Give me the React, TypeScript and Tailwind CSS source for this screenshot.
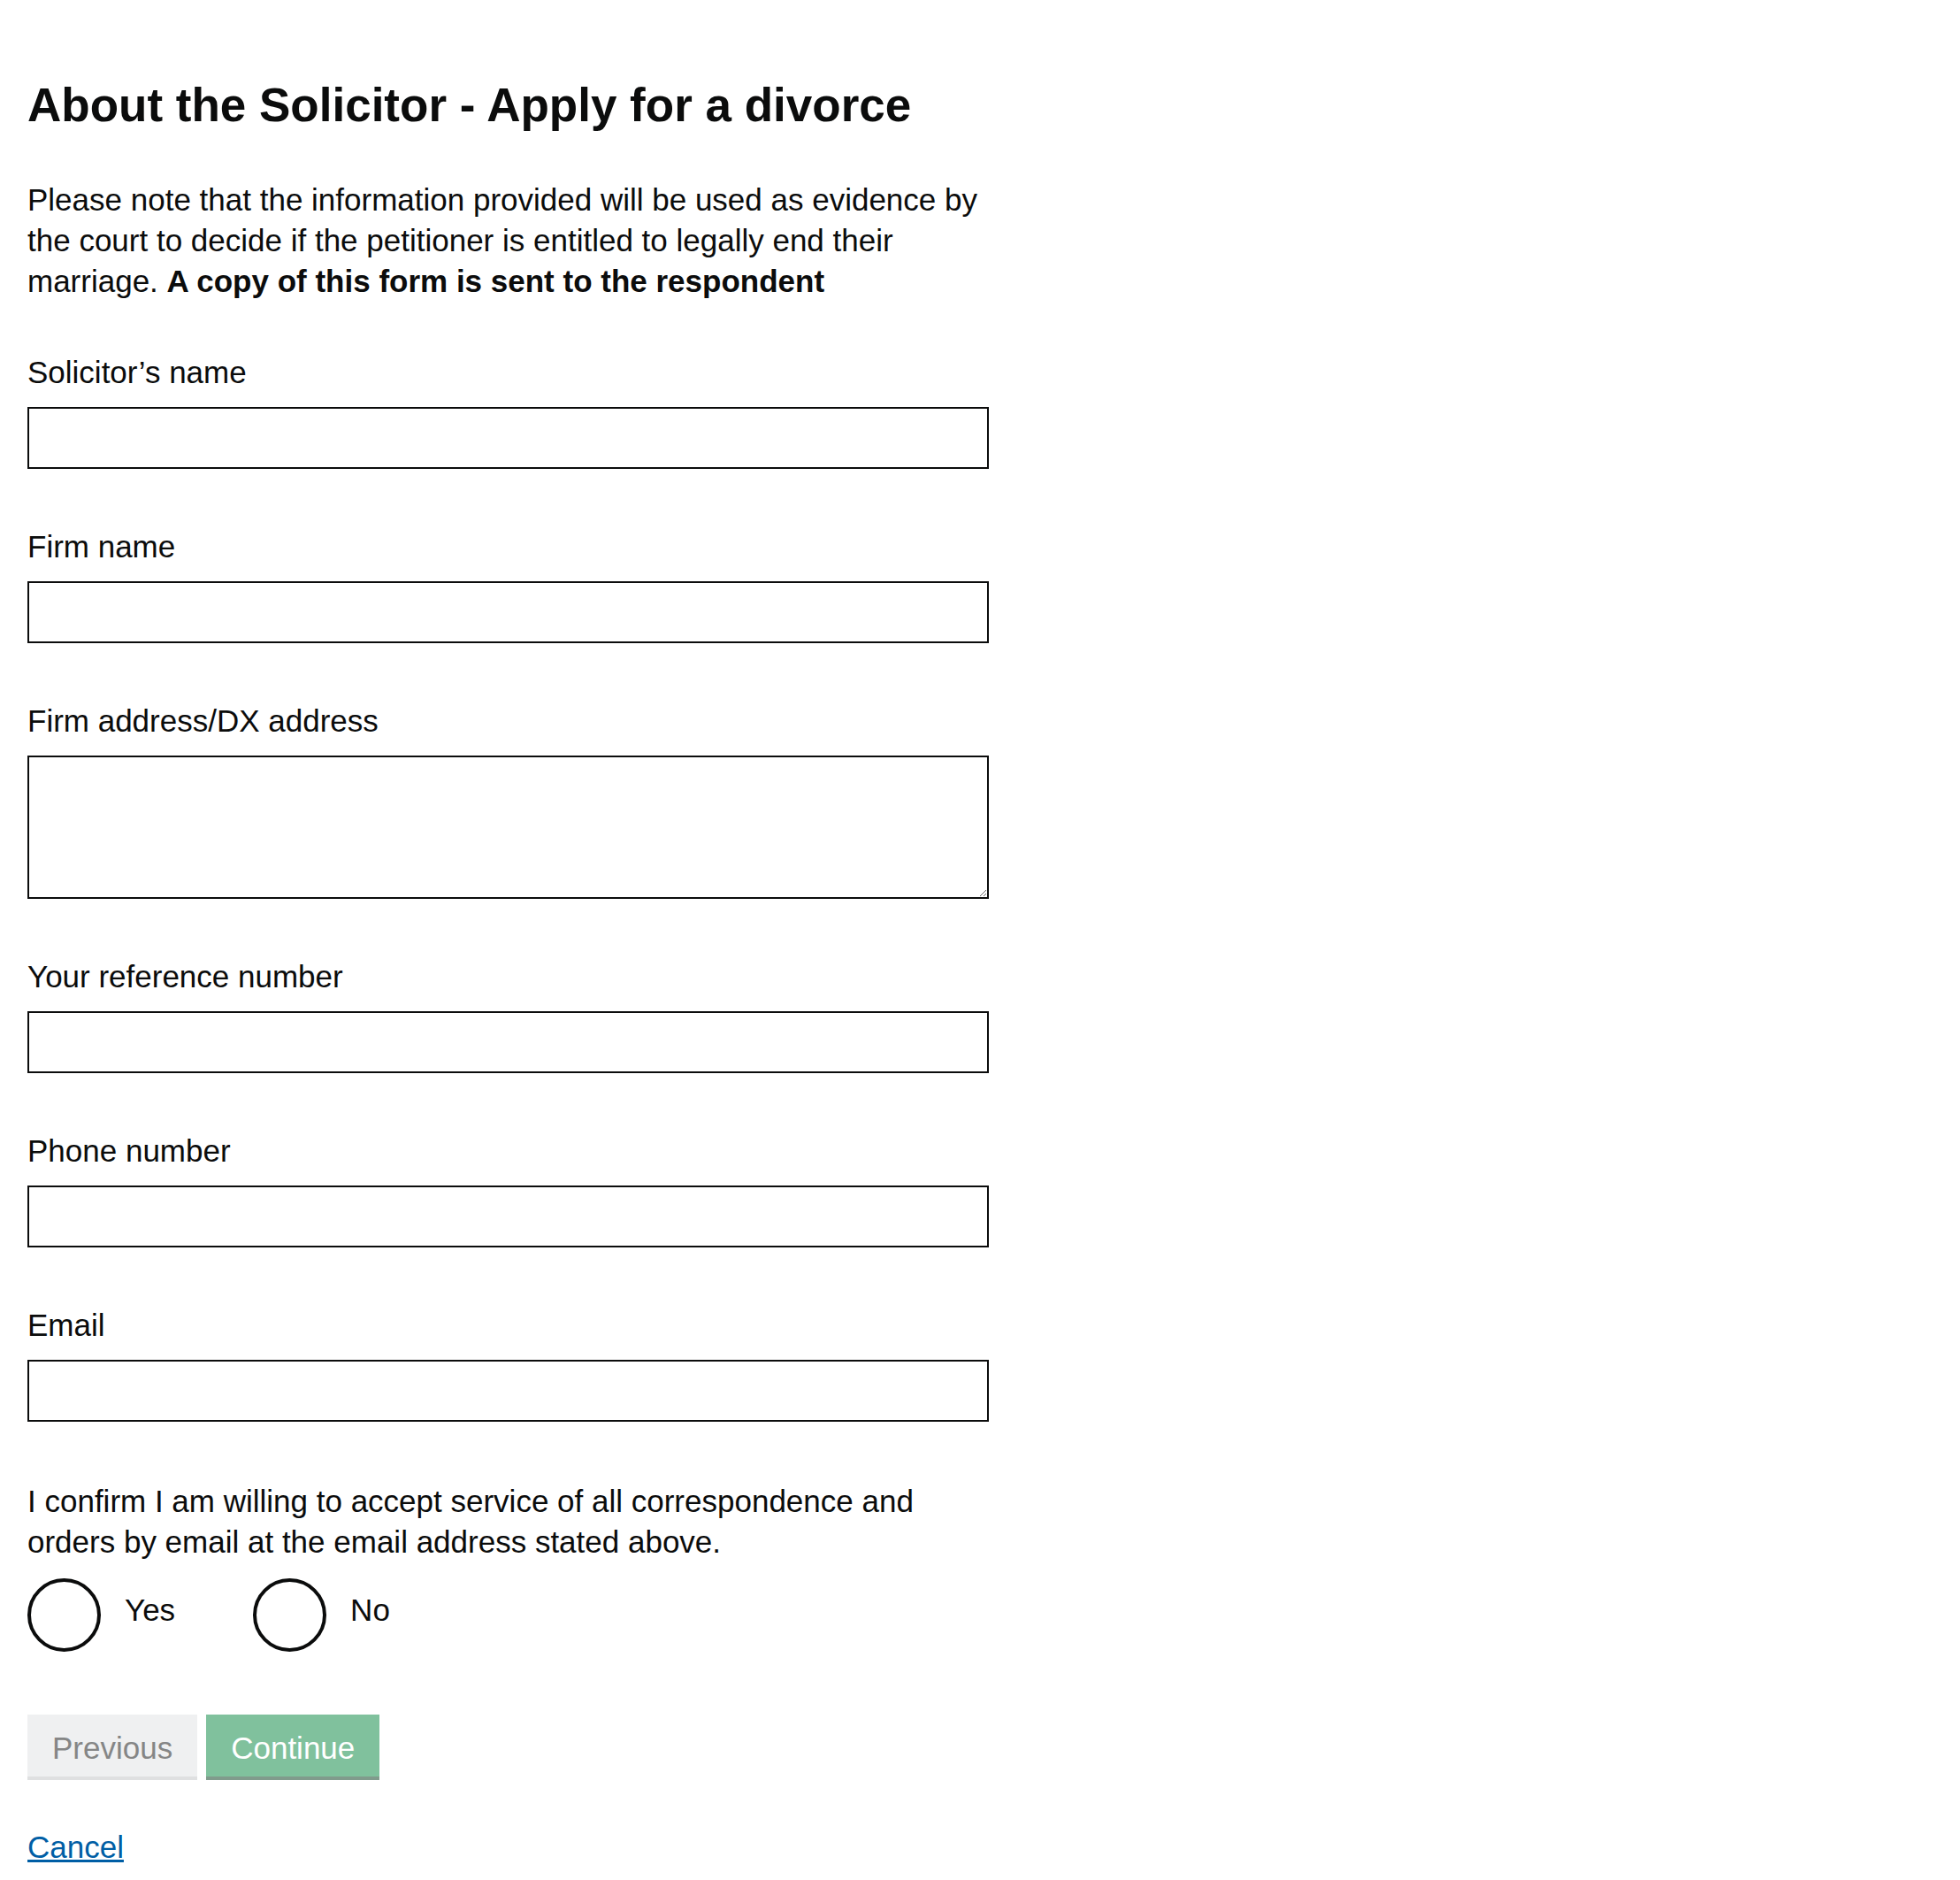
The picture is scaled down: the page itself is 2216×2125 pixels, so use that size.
import { useState } from 'react';

const fields = [
  { id: 'solicitor-name', label: 'Solicitor’s name' },
  { id: 'firm-name', label: 'Firm name' },
  { id: 'firm-address', label: 'Firm address/DX address', multiline: true },
  { id: 'reference', label: 'Your reference number' },
  { id: 'phone', label: 'Phone number' },
  { id: 'email', label: 'Email' },
];

export default function App() {
  const [values, setValues] = useState<Record<string, string>>({});
  const [accept, setAccept] = useState<string | null>(null);

  const update = (id: string, value: string) => setValues((v) => ({ ...v, [id]: value }));

  return (
    <div className="min-h-screen bg-white text-[#0b0c0c] font-['Liberation_Sans',Arial,sans-serif]">
      <main className="w-[1087px] ml-[31px] pt-[89px] pb-[16px]">
        <h1 className="text-[53px] leading-[60px] font-bold">
          About the Solicitor - Apply for a divorce
        </h1>
        <p className="mt-[54px] text-[35px] leading-[46px]">
          Please note that the information provided will be used as evidence by the court to decide if the
          petitioner is entitled to legally end their marriage.{' '}
          <strong className="font-bold">A copy of this form is sent to the respondent</strong>
        </p>

        <form onSubmit={(e) => e.preventDefault()}>
          {fields.map((f, i) => (
            <div key={f.id} className={i === 0 ? 'mt-[57px]' : 'mt-[65px]'}>
              <label htmlFor={f.id} className="block text-[35px] leading-[46px] mb-[16px]">
                {f.label}
              </label>
              {f.multiline ? (
                <textarea
                  id={f.id}
                  value={values[f.id] || ''}
                  onChange={(e) => update(f.id, e.target.value)}
                  className="block w-full h-[162px] border-2 border-[#0b0c0c] bg-white px-2 text-[35px] outline-none"
                />
              ) : (
                <input
                  id={f.id}
                  type="text"
                  value={values[f.id] || ''}
                  onChange={(e) => update(f.id, e.target.value)}
                  className="block w-full h-[70px] border-2 border-[#0b0c0c] bg-white px-2 text-[35px] outline-none"
                />
              )}
            </div>
          ))}

          <fieldset className="mt-[67px]">
            <legend className="text-[35px] leading-[46px]">
              I confirm I am willing to accept service of all correspondence and orders by email at the email
              address stated above.
            </legend>
            <div className="mt-[18px] flex items-start gap-[88px]">
              {['Yes', 'No'].map((opt) => (
                <label key={opt} className="flex items-start cursor-pointer">
                  <input
                    type="radio"
                    name="accept"
                    value={opt}
                    checked={accept === opt}
                    onChange={() => setAccept(opt)}
                    className="sr-only"
                  />
                  <span className="w-[83px] h-[83px] rounded-full border-4 border-[#0b0c0c] flex items-center justify-center">
                    {accept === opt && <span className="w-[42px] h-[42px] rounded-full bg-[#0b0c0c]" />}
                  </span>
                  <span className="ml-[27px] mt-[13px] text-[35px] leading-[46px]">{opt}</span>
                </label>
              ))}
            </div>
          </fieldset>

          <div className="mt-[71px] flex gap-[10px]">
            <button
              type="button"
              className="h-[70px] px-[28px] pt-[15px] pb-[9px] text-[35px] leading-[46px] bg-[#eff0f1] text-[#858686] shadow-[0_4px_0_#dfe0e1]"
            >
              Previous
            </button>
            <button
              type="submit"
              className="h-[70px] px-[28px] pt-[15px] pb-[9px] text-[35px] leading-[46px] bg-[#80c19d] text-white shadow-[0_4px_0_#809b8c]"
            >
              Continue
            </button>
          </div>
        </form>

        <div className="mt-[57px]">
          <a href="#" className="text-[35px] leading-[46px] text-[#005ea5] underline">
            Cancel
          </a>
        </div>
      </main>
    </div>
  );
}
